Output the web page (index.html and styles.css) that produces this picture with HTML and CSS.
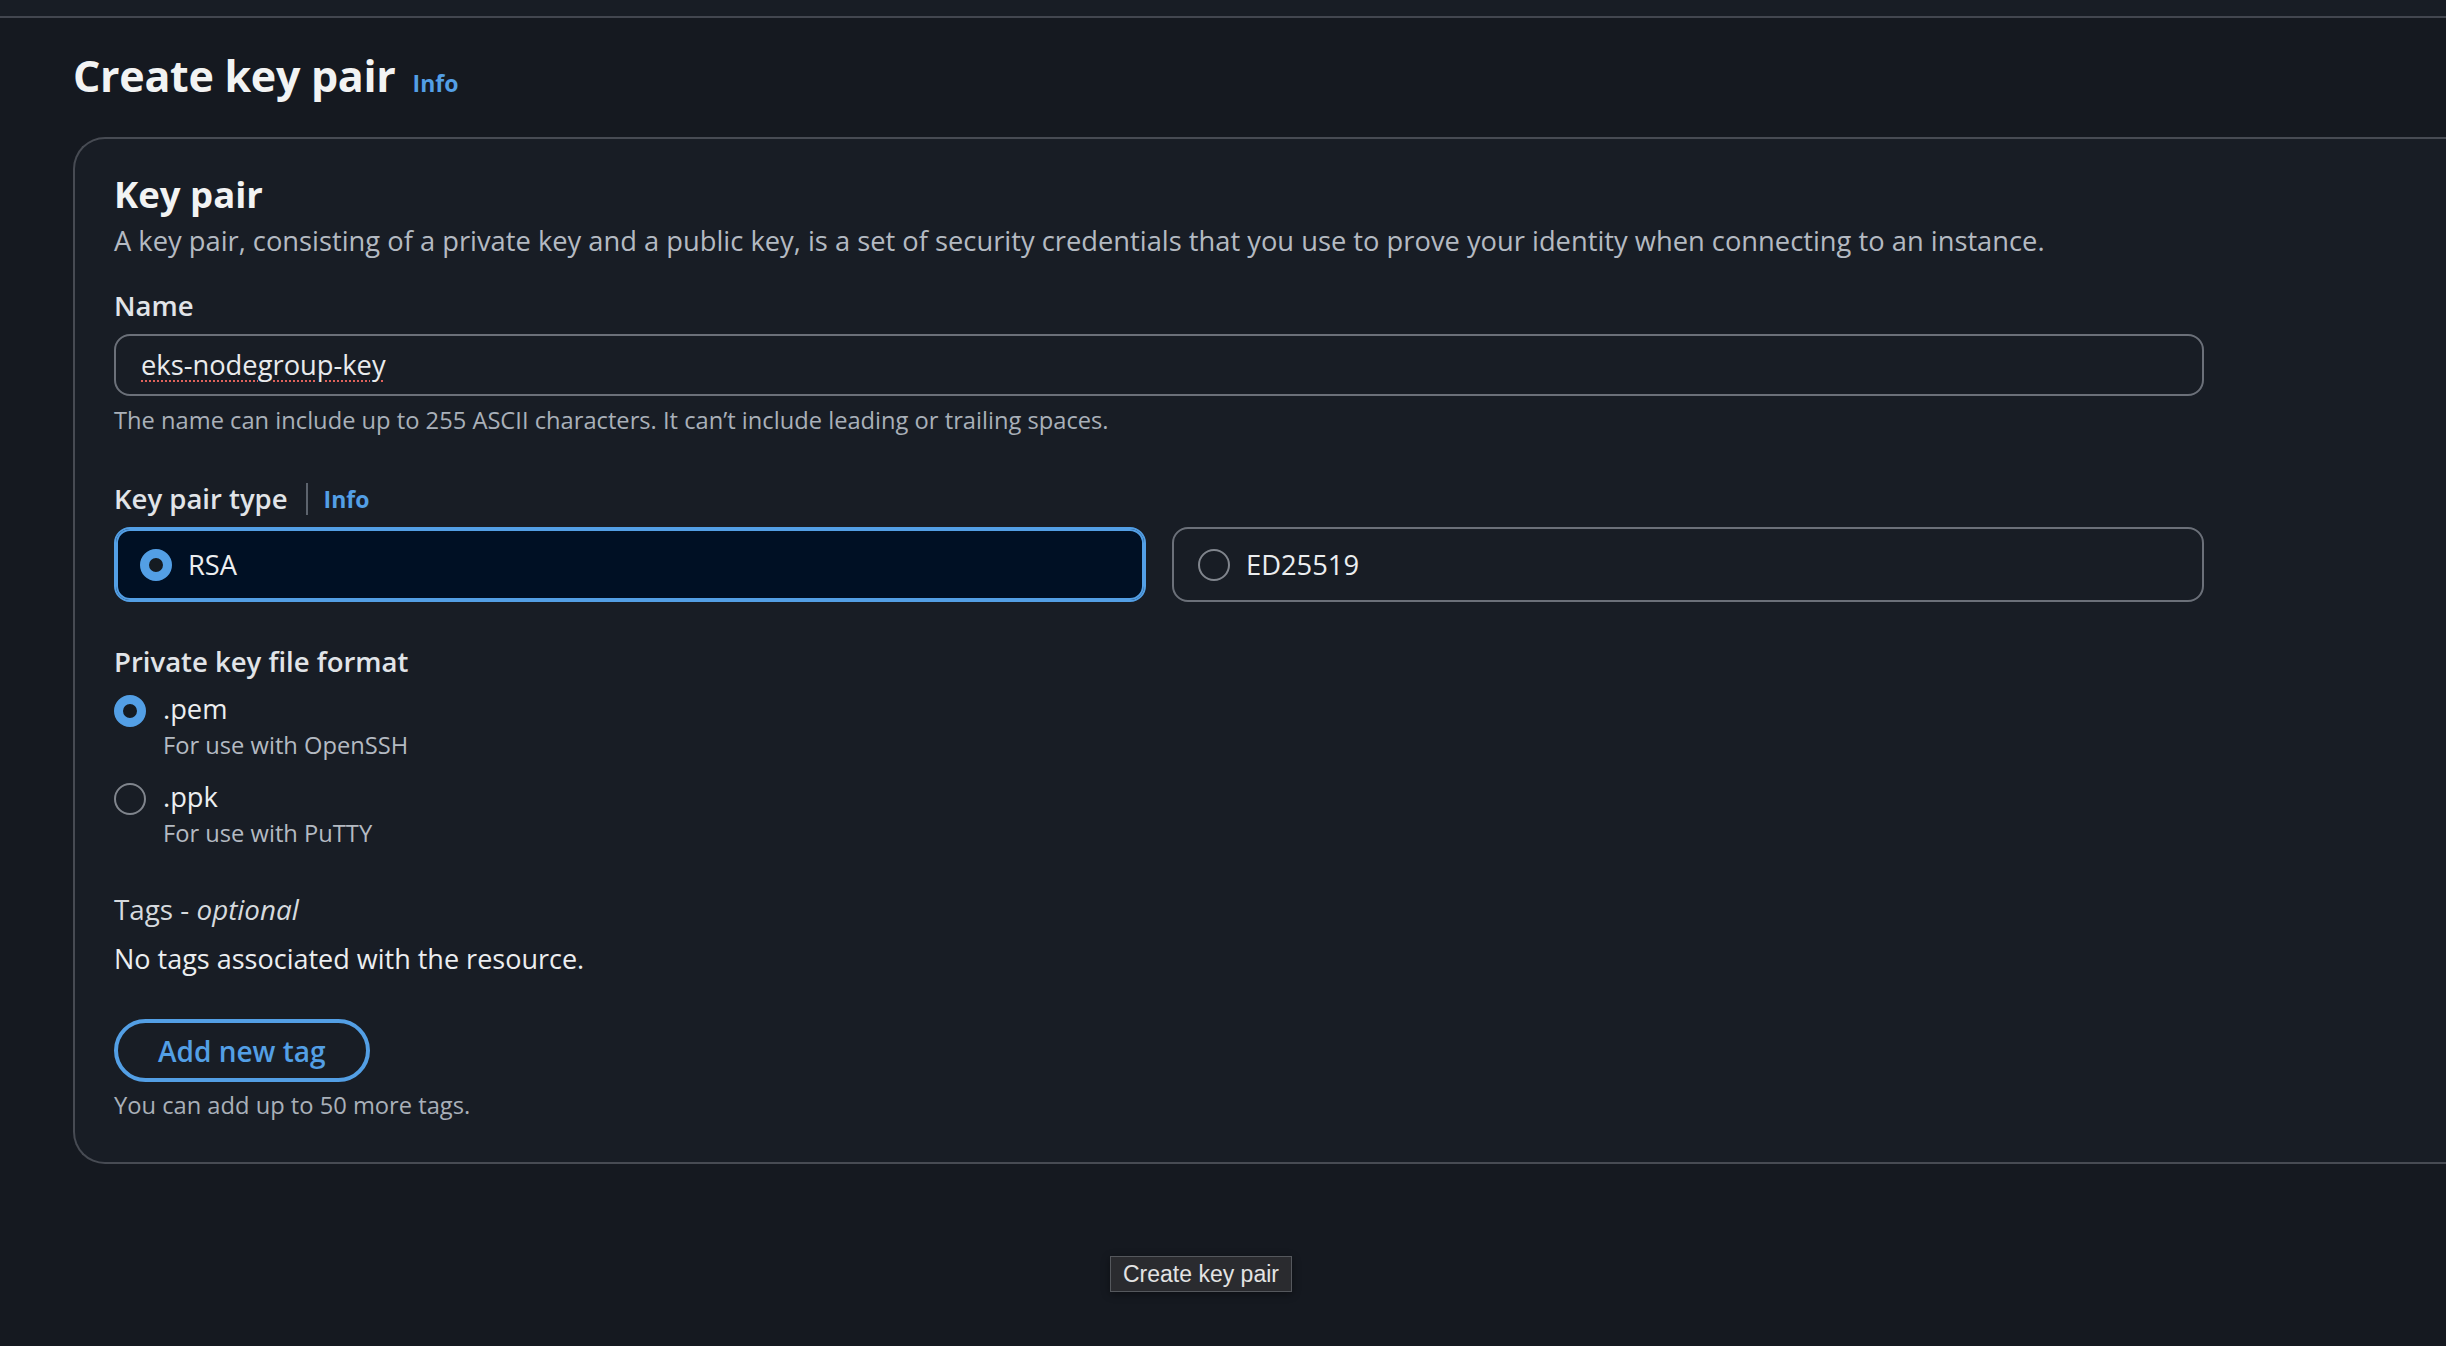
FILE: index.html
```html
<!DOCTYPE html>
<html>
    <head>
        <meta http-equiv="Content-Type" content="text/html; charset=utf-8"/>
        <link rel="stylesheet" href="styles.css">
    </head>
    <body>
        <div class="topbar"></div>
        <div class="page">
            <h1 class="title">Create key pair <a class="info-link">Info</a></h1>

            <div class="card">
                <div class="card-body">
                    <h2 class="card-title">Key pair</h2>
                    <div class="card-desc">A key pair, consisting of a private key and a public key, is a set of security credentials that you use to prove your identity when connecting to an instance.</div>

                    <div class="label label-name">Name</div>
                    <div class="text-input"><span class="typo">eks-nodegroup-key</span></div>
                    <div class="hint">The name can include up to 255 ASCII characters. It can’t include leading or trailing spaces.</div>

                    <div class="label label-type">
                        <span>Key pair type</span>
                        <span class="divider"></span>
                        <a class="info-small">Info</a>
                    </div>
                    <div class="tiles">
                        <div class="tile tile_selected">
                            <span class="radio radio_on"></span>
                            <span class="tile-text">RSA</span>
                        </div>
                        <div class="tile">
                            <span class="radio"></span>
                            <span class="tile-text">ED25519</span>
                        </div>
                    </div>

                    <div class="label label-format">Private key file format</div>
                    <div class="option option-first">
                        <span class="radio radio_on"></span>
                        <div class="option-text">
                            <div class="option-name">.pem</div>
                            <div class="option-desc">For use with OpenSSH</div>
                        </div>
                    </div>
                    <div class="option">
                        <span class="radio"></span>
                        <div class="option-text">
                            <div class="option-name">.ppk</div>
                            <div class="option-desc">For use with PuTTY</div>
                        </div>
                    </div>

                    <div class="tags-label">Tags - <i>optional</i></div>
                    <div class="tags-empty">No tags associated with the resource.</div>
                    <button class="add-tag">Add new tag</button>
                    <div class="hint hint-tags">You can add up to 50 more tags.</div>
                </div>
            </div>
        </div>

        <!-- native tooltip hovering over the submit button -->
        <div class="tooltip">Create key pair</div>
    </body>
</html>
```

FILE: styles.css
```css
html, body {
    margin: 0;
    padding: 0;
}

body {
    background-color: #151920;
    font-family: "Open Sans", "Noto Sans", sans-serif;
    color: #e9ebed;
    width: 2446px;
    height: 1346px;
    overflow: hidden;
    position: relative;
}

.topbar {
    height: 16px;
    background-color: #181d25;
    border-bottom: 2px solid #42464f;
}

.page {
    padding-left: 73px;
}

.title {
    display: flex;
    align-items: baseline;
    gap: 17px;
    margin: 28px 0 31px 0;
    font-size: 43px;
    line-height: 60px;
    font-weight: 700;
    color: #f2f3f3;
    letter-spacing: -0.3px;
}

.info-link {
    font-size: 23px;
    line-height: 1;
    font-weight: 700;
    color: #539fe5;
    letter-spacing: 0;
}

.card {
    background-color: #181d25;
    border: 2px solid #474b53;
    border-right: none;
    border-radius: 32px 0 0 32px;
    padding: 32px 0 40px 39px;
}

.card-body {
    width: 2090px;
}

.card-title {
    margin: 0;
    font-size: 36.5px;
    line-height: 46px;
    font-weight: 700;
    color: #f2f3f3;
}

.card-desc {
    margin-top: 4px;
    font-size: 27.3px;
    line-height: 40px;
    color: #b4bac2;
}

.label {
    font-size: 27.5px;
    line-height: 40px;
    font-weight: 600;
    color: #e1e4e8;
}

.label-name {
    margin-top: 25px;
}

.label-type {
    margin-top: 42px;
    display: flex;
    align-items: center;
}

.label-format {
    margin-top: 40px;
}

.divider {
    width: 2px;
    height: 32px;
    background-color: #5c636d;
    margin: 0 16px 0 18px;
}

.info-small {
    font-size: 23px;
    font-weight: 700;
    color: #539fe5;
}

.text-input {
    margin-top: 8px;
    height: 62px;
    box-sizing: border-box;
    border: 2px solid #6b7079;
    border-radius: 16px;
    padding: 0 25px;
    display: flex;
    align-items: center;
    font-size: 27.3px;
    line-height: 40px;
    color: #e9ebed;
}

.typo {
    text-decoration: underline dotted #e0625c;
    text-decoration-thickness: 2px;
    text-underline-offset: 5px;
}

.hint {
    margin-top: 7px;
    font-size: 23.7px;
    line-height: 34px;
    color: #a9b0b9;
}

.tiles {
    margin-top: 8px;
    display: grid;
    grid-template-columns: 1fr 1fr;
    gap: 26px;
}

.tile {
    height: 75px;
    box-sizing: border-box;
    border: 2px solid #6b7079;
    border-radius: 16px;
    padding: 0 24px;
    display: flex;
    align-items: center;
    gap: 16px;
}

.tile_selected {
    border-color: #539fe5;
    box-shadow: inset 0 0 0 2px #539fe5;
    background-color: #001024;
}

.tile-text {
    font-size: 27.3px;
    line-height: 40px;
    color: #eceef0;
}

.radio {
    flex: none;
    width: 32px;
    height: 32px;
    box-sizing: border-box;
    border: 2px solid #80858d;
    border-radius: 50%;
}

.radio_on {
    border: 9px solid #539fe5;
    background-color: #151b21;
}

.option {
    display: flex;
    align-items: flex-start;
    margin-top: 16px;
}

.option-first {
    margin-top: 8px;
}

.option .radio {
    margin-top: 5px;
}

.option-text {
    margin-left: 17px;
}

.option-name {
    font-size: 27.3px;
    line-height: 38px;
    color: #eceef0;
}

.option-desc {
    font-size: 23.7px;
    line-height: 34px;
    color: #b4bac2;
}

.tags-label {
    margin-top: 39px;
    font-size: 27.8px;
    line-height: 40px;
    color: #d6dade;
}

.tags-empty {
    margin-top: 10px;
    font-size: 27px;
    line-height: 40px;
    color: #eceef0;
}

.add-tag {
    display: flex;
    align-items: center;
    margin-top: 40px;
    height: 63px;
    box-sizing: border-box;
    padding: 0 40px;
    border: 4px solid #539fe5;
    border-radius: 32px;
    background: transparent;
    font-family: "Open Sans", "Noto Sans", sans-serif;
    font-size: 28px;
    line-height: 40px;
    font-weight: 600;
    color: #539fe5;
}

.hint-tags {
    margin-top: 6px;
}

.tooltip {
    position: absolute;
    left: 1110px;
    top: 1256px;
    height: 36px;
    box-sizing: border-box;
    padding: 0 12px;
    background-color: #2a2b2f;
    border: 1px solid #55585d;
    box-shadow: 0 2px 8px rgba(0, 0, 0, 0.4);
    font-family: "Liberation Sans", Arial, sans-serif;
    font-size: 23px;
    line-height: 34px;
    color: #e3e3e3;
}
```
